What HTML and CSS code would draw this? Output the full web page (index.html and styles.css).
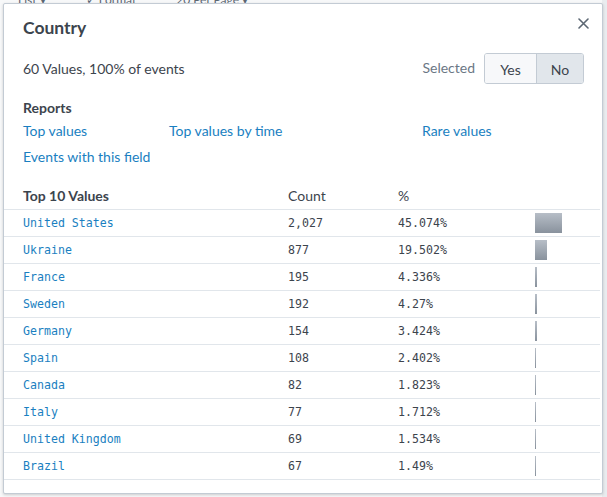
FILE: index.html
```html
<!DOCTYPE html>
<html>
<head>
<meta charset="utf-8">
<link rel="stylesheet" href="styles.css">
</head>
<body>
<div class="page">
  <div class="toolbar"><span>List ▾</span><span>✓ Format</span><span>20 Per Page ▾</span></div>
  <div class="side"></div>
</div>
<div class="popup">
  <button class="close" aria-label="Close"><svg width="11" height="11" viewBox="0 0 11 11"><path d="M1 1 L10 10 M10 1 L1 10" stroke="#5c6773" stroke-width="1.6" stroke-linecap="round"/></svg></button>
  <h1 class="title">Country</h1>
  <div class="summary">
    <span class="stats">60 Values, 100% of events</span>
    <div class="selected">
      <span class="sel-label">Selected</span>
      <div class="toggle"><span class="opt">Yes</span><span class="opt active">No</span></div>
    </div>
  </div>
  <div class="reports-title">Reports</div>
  <div class="links">
    <a>Top values</a><a>Top values by time</a><a>Rare values</a>
    <a>Events with this field</a>
  </div>
  <table class="values">
    <thead><tr><th class="c1">Top 10 Values</th><th class="c2">Count</th><th class="c3">%</th><th class="c4"></th></tr></thead>
    <tbody>
      <tr><td class="c1 name">United States</td><td class="c2">2,027</td><td class="c3">45.074%</td><td class="c4"><div class="bar" style="width:27px"></div></td></tr>
      <tr><td class="c1 name">Ukraine</td><td class="c2">877</td><td class="c3">19.502%</td><td class="c4"><div class="bar" style="width:12px"></div></td></tr>
      <tr><td class="c1 name">France</td><td class="c2">195</td><td class="c3">4.336%</td><td class="c4"><div class="bar" style="width:2px"></div></td></tr>
      <tr><td class="c1 name">Sweden</td><td class="c2">192</td><td class="c3">4.27%</td><td class="c4"><div class="bar" style="width:2px"></div></td></tr>
      <tr><td class="c1 name">Germany</td><td class="c2">154</td><td class="c3">3.424%</td><td class="c4"><div class="bar" style="width:2px"></div></td></tr>
      <tr><td class="c1 name">Spain</td><td class="c2">108</td><td class="c3">2.402%</td><td class="c4"><div class="bar" style="width:1px"></div></td></tr>
      <tr><td class="c1 name">Canada</td><td class="c2">82</td><td class="c3">1.823%</td><td class="c4"><div class="bar" style="width:1px"></div></td></tr>
      <tr><td class="c1 name">Italy</td><td class="c2">77</td><td class="c3">1.712%</td><td class="c4"><div class="bar" style="width:1px"></div></td></tr>
      <tr><td class="c1 name">United Kingdom</td><td class="c2">69</td><td class="c3">1.534%</td><td class="c4"><div class="bar" style="width:1px"></div></td></tr>
      <tr><td class="c1 name">Brazil</td><td class="c2">67</td><td class="c3">1.49%</td><td class="c4"><div class="bar" style="width:1px"></div></td></tr>
    </tbody>
  </table>
</div>
</body>
</html>
```
FILE: styles.css
```css
html, body { margin: 0; padding: 0; }
body {
  width: 607px; height: 497px; overflow: hidden;
  background: #f7f8f9;
  font-family: Lato, "Open Sans", sans-serif;
  color: #3c444d;
  position: relative;
}
.page { height: 497px; display: flex; flex-direction: column; }
.toolbar {
  height: 4px; overflow: hidden; display: flex; gap: 40px; padding-left: 18px;
  font-size: 12px; line-height: 4px; color: #5c6773;
}
.toolbar span { display: block; line-height: 0; padding-top: 0; }
.side { position: absolute; right: 0; top: 0; width: 5px; height: 497px; background: #e9ecef; }

.popup {
  position: absolute; left: 3px; top: 3px;
  width: 598px; height: 489px;
  background: #fff;
  border: 1px solid #c3cbd4;
  border-radius: 2px;
  box-shadow: 0 1px 3px rgba(0,0,0,0.18);
  box-sizing: content-box;
}
.close {
  position: absolute; right: 12px; top: 13px;
  width: 13px; height: 13px; padding: 1px; border: 0; background: none;
  display: flex; align-items: center; justify-content: center;
}
.title {
  margin: 0; padding: 12px 19px 0; font-size: 17.5px; line-height: 24px; font-weight: 700; color: #3c444d;
}
.summary {
  margin-top: 13px; padding: 0 18px 0 19px;
  display: flex; justify-content: space-between; align-items: center;
  height: 31px;
}
.stats { font-size: 14px; }
.selected { display: flex; align-items: center; gap: 9px; }
.sel-label { font-size: 14px; color: #6b7785; margin-top: -3px; }
.toggle {
  display: flex; height: 29px; border: 1px solid #c3cbd4; border-radius: 3px; overflow: hidden;
}
.opt {
  display: flex; align-items: center; justify-content: center;
  font-size: 14px; color: #3c444d; background: #f7f8fa; padding-top: 2px;
}
.opt:first-child { width: 51px; border-right: 1px solid #c3cbd4; }
.opt.active { width: 46px; background: #e1e6eb; }
.reports-title {
  margin-top: 15px; padding: 0 19px; font-size: 14px; line-height: 18px; font-weight: 700;
}
.links {
  margin-top: 5px; padding: 0 19px;
  display: grid; grid-template-columns: 146px 253px 1fr; row-gap: 8px;
  font-size: 14px; line-height: 18px;
}
.links a { color: #1a7fc1; cursor: pointer; }
.values {
  margin-top: 21px; width: 596px; border-collapse: collapse; table-layout: fixed;
}
.values th, .values td { box-sizing: border-box; }
.values th {
  text-align: left; font-size: 14px; line-height: 18px; padding: 0 0 4px;
  border-bottom: 1px solid #e1e6eb;
}
.values th.c1 { font-weight: 700; }
.values th.c2, .values th.c3 { font-weight: 400; }
.values td {
  height: 27px; padding: 0; border-bottom: 1px solid #e1e6eb;
  font-family: "DejaVu Sans Mono", "Liberation Mono", monospace;
  font-size: 11.6px; color: #3c444d; vertical-align: middle;
}
.c1 { padding-left: 19px !important; width: 284px; }
.c2 { width: 110px; }
.c3 { width: 137px; }
.values td.name { color: #1a7fc1; }
.bar {
  height: 20px;
  background: linear-gradient(#b7bec7, #89929d);
}
```
